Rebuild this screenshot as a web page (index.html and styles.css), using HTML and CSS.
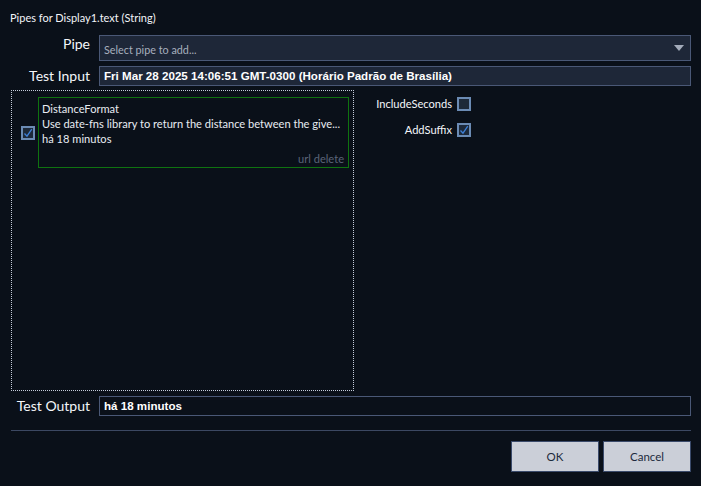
FILE: index.html
```html
<!DOCTYPE html>
<html>
<head>
<meta charset="utf-8">
<link rel="stylesheet" href="styles.css">
</head>
<body>
<div class="dialog">
  <div class="title">Pipes for Display1.text (String)</div>
  <div class="row row-pipe">
    <div class="label">Pipe</div>
    <div class="select">
      <span class="placeholder">Select pipe to add...</span>
      <svg class="arrow" width="10" height="6" viewBox="0 0 10 6"><path d="M0 0 H10 L5 6 Z" fill="#a3abba"/></svg>
    </div>
  </div>
  <div class="row row-input">
    <div class="label">Test Input</div>
    <div class="field">Fri Mar 28 2025 14:06:51 GMT-0300 (Horário Padrão de Brasília)</div>
  </div>
  <div class="main">
    <div class="pipes">
      <div class="pipe-item">
        <span class="check checked"><svg width="10" height="10" viewBox="0 0 10 10"><path d="M1.5 5.5 L4 8.2 L8.8 1.2" fill="none" stroke="#3d7fd6" stroke-width="1.3"/></svg></span>
        <div class="card">
          <div class="line">DistanceFormat</div>
          <div class="line">Use date-fns library to return the distance between the give...</div>
          <div class="line">há 18 minutos</div>
          <div class="actions">url delete</div>
        </div>
      </div>
    </div>
    <div class="options">
      <div class="opt-label">IncludeSeconds</div>
      <span class="check"></span>
      <div class="opt-label">AddSuffix</div>
      <span class="check checked"><svg width="10" height="10" viewBox="0 0 10 10"><path d="M1.5 5.5 L4 8.2 L8.8 1.2" fill="none" stroke="#3d7fd6" stroke-width="1.3"/></svg></span>
    </div>
  </div>
  <div class="row row-output">
    <div class="label">Test Output</div>
    <div class="field output">há 18 minutos</div>
  </div>
  <div class="separator"></div>
  <div class="buttons">
    <button class="btn">OK</button>
    <button class="btn">Cancel</button>
  </div>
</div>
</body>
</html>
```
FILE: styles.css
```css
html, body {
  margin: 0;
  padding: 0;
  background: #0a1019;
}
.dialog {
  width: 701px;
  height: 486px;
  box-sizing: border-box;
  padding: 0 10px 0 11px;
  display: flex;
  flex-direction: column;
  font-family: Lato, "Open Sans", sans-serif;
  color: #f2f4f8;
  background: #0a1019;
}
.title {
  font-size: 11px;
  line-height: 16px;
  margin-top: 10px;
  margin-left: -1px;
  height: 16px;
}
.row {
  display: grid;
  grid-template-columns: 79px 1fr;
  column-gap: 9px;
  align-items: center;
}
.row-pipe { margin-top: 9px; }
.row-input { margin-top: 5px; }
.row-output { margin-top: 5px; }
.label {
  text-align: right;
  font-size: 14px;
  line-height: 18px;
  color: #f4f6fa;
}
.row-pipe .label { align-self: start; margin-top: 0; }
.select {
  height: 26px;
  box-sizing: border-box;
  border: 1px solid #4a5876;
  background: #1e2738;
  display: flex;
  align-items: center;
  padding: 2px 6px 0 4px;
}
.placeholder {
  flex: 1;
  font-size: 10.8px;
  color: #a8b0be;
}
.arrow { margin-bottom: 3px; }
.field {
  height: 20px;
  box-sizing: border-box;
  border: 1px solid #4a5876;
  background: #1e2738;
  padding: 0 4px;
  font-family: "Liberation Sans", Arial, sans-serif;
  font-weight: bold;
  font-size: 11.6px;
  line-height: 18px;
  color: #ffffff;
  white-space: nowrap;
  overflow: hidden;
}
.field.output {
  background: #0a1019;
}
.main {
  margin-top: 4px;
  height: 301px;
  display: flex;
}
.pipes {
  width: 343px;
  flex: none;
  box-sizing: border-box;
  border: 1px dotted #c4ccda;
  padding: 6px 4px 0 9px;
}
.pipe-item {
  display: flex;
  align-items: center;
  gap: 3px;
}
.check {
  width: 14px;
  height: 14px;
  box-sizing: border-box;
  border: 2px solid #6b8bb4;
  background: #1d2939;
  display: flex;
  align-items: center;
  justify-content: center;
  flex: none;
}
.card {
  flex: 1;
  min-width: 0;
  height: 71px;
  box-sizing: border-box;
  border: 1px solid #0f7310;
  padding: 3px 4px 0 3px;
  font-size: 11.1px;
  line-height: 15px;
  color: #e8ecf2;
}
.line {
  white-space: nowrap;
  overflow: hidden;
}
.actions {
  margin-top: 5px;
  text-align: right;
  color: #5b6478;
}
.options {
  flex: 1;
  display: grid;
  grid-template-columns: 98px 14px;
  column-gap: 5px;
  row-gap: 12px;
  align-content: start;
  align-items: center;
  padding-top: 7px;
}
.opt-label {
  text-align: right;
  font-size: 11.1px;
  line-height: 14px;
  color: #f4f6fa;
}
.separator {
  margin-top: 14px;
  height: 1px;
  background: #3c4862;
}
.buttons {
  margin-top: 10px;
  display: flex;
  justify-content: flex-end;
  gap: 4px;
}
.btn {
  width: 88px;
  height: 31px;
  box-sizing: border-box;
  border: 1px solid #3a4a6a;
  background: #cbcfd8;
  color: #1c2a3c;
  font-family: Lato, "Open Sans", sans-serif;
  font-size: 11.5px;
  padding: 0;
}
```
